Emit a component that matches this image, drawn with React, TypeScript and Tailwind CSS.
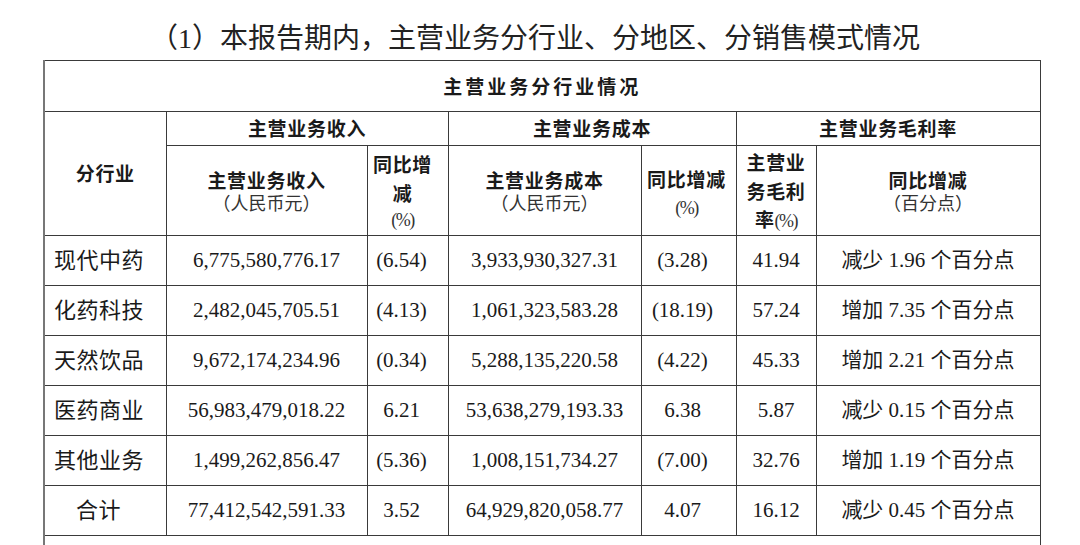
const serif = "font-['Liberation_Serif','Noto_Sans_CJK_SC',serif]"
const hei = "font-['Noto_Sans_CJK_SC',sans-serif]"

interface Row {
  name: string
  revenue: string
  revenueYoy: string
  cost: string
  costYoy: string
  margin: string
  marginYoy: string
  total?: boolean
}

const rows: Row[] = [
  { name: '现代中药', revenue: '6,775,580,776.17', revenueYoy: '(6.54)', cost: '3,933,930,327.31', costYoy: '(3.28)', margin: '41.94', marginYoy: '减少 1.96 个百分点' },
  { name: '化药科技', revenue: '2,482,045,705.51', revenueYoy: '(4.13)', cost: '1,061,323,583.28', costYoy: '(18.19)', margin: '57.24', marginYoy: '增加 7.35 个百分点' },
  { name: '天然饮品', revenue: '9,672,174,234.96', revenueYoy: '(0.34)', cost: '5,288,135,220.58', costYoy: '(4.22)', margin: '45.33', marginYoy: '增加 2.21 个百分点' },
  { name: '医药商业', revenue: '56,983,479,018.22', revenueYoy: '6.21', cost: '53,638,279,193.33', costYoy: '6.38', margin: '5.87', marginYoy: '减少 0.15 个百分点' },
  { name: '其他业务', revenue: '1,499,262,856.47', revenueYoy: '(5.36)', cost: '1,008,151,734.27', costYoy: '(7.00)', margin: '32.76', marginYoy: '增加 1.19 个百分点' },
  { name: '合计', revenue: '77,412,542,591.33', revenueYoy: '3.52', cost: '64,929,820,058.77', costYoy: '4.07', margin: '16.12', marginYoy: '减少 0.45 个百分点', total: true },
]

const cell = 'border border-[#3a3a3a] p-0 align-middle'
const head = `${cell} ${hei} font-bold text-[19px] tracking-[0.7px] text-[#1a1a1a] text-center`
// the small "(%)" marks in the header are narrow in the original
const pct = `${serif} font-normal text-[18px] tracking-[-1.5px] text-[#333]`

export default function App() {
  return (
    <div className="w-[1080px] h-[545px] overflow-hidden bg-white text-[#1a1a1a]">
      <div className={`${serif} h-[60px] pt-[23px] pr-[10px] text-center text-[28px] leading-[32px] text-[#222]`}>
        （1）本报告期内，主营业务分行业、分地区、分销售模式情况
      </div>

      <table className="ml-[43px] w-[997px] table-fixed border-collapse border-l-2 border-l-[#777]">
        <colgroup>
          <col className="w-[122px]" />
          <col className="w-[201px]" />
          <col className="w-[81px]" />
          <col className="w-[193px]" />
          <col className="w-[95px]" />
          <col className="w-[80px]" />
          <col className="w-[224px]" />
        </colgroup>
        <thead>
          <tr className="h-[51px]">
            <th colSpan={7} className={`${head} tracking-[3px] border-l-[#777] pt-[1px]`}>主营业务分行业情况</th>
          </tr>
          <tr className="h-[34px]">
            <th rowSpan={2} className={`${head} border-l-[#777]`}>分行业</th>
            <th colSpan={2} className={head}>主营业务收入</th>
            <th colSpan={2} className={head}>主营业务成本</th>
            <th colSpan={2} className={head}>主营业务毛利率</th>
          </tr>
          <tr className="h-[90px]">
            <th className={head}>
              <div className="leading-[25px] pt-[2px]">主营业务收入</div>
              <div className={`${serif} font-normal text-[18px] tracking-normal leading-[25px] text-[#333]`}>（人民币元）</div>
            </th>
            <th className={`${head} pr-[10px]`}>
              <div className="leading-[29px]">同比增</div>
              <div className="leading-[29px]">减</div>
              <div className={`${pct} leading-[26px]`}>(%)</div>
            </th>
            <th className={head}>
              <div className="leading-[25px] pt-[2px]">主营业务成本</div>
              <div className={`${serif} font-normal text-[18px] tracking-normal leading-[25px] text-[#333]`}>（人民币元）</div>
            </th>
            <th className={`${head} pr-[4px]`}>
              <div className="leading-[30px] pt-[4px]">同比增减</div>
              <div className={`${pct} leading-[28px]`}>(%)</div>
            </th>
            <th className={head}>
              <div className="leading-[29px]">主营业</div>
              <div className="leading-[29px]">务毛利</div>
              <div className="leading-[28px]">
                率<span className={pct}>(%)</span>
              </div>
            </th>
            <th className={head}>
              <div className="leading-[25px] pt-[2px]">同比增减</div>
              <div className={`${serif} font-normal text-[18px] tracking-normal leading-[25px] text-[#333]`}>（百分点）</div>
            </th>
          </tr>
        </thead>
        <tbody className={`${serif} text-[21px] text-[#1a1a1a]`}>
          {rows.map((row) => (
            <tr key={row.name} className="h-[50px]">
              <td className={`${cell} border-l-[#777] ${row.total ? 'pl-[31px]' : 'pl-[9px]'} text-[22px] tracking-[0.5px]`}>
                {row.name}
              </td>
              <td className={`${cell} text-center`}>{row.revenue}</td>
              <td className={`${cell} text-center pr-[12px]`}>{row.revenueYoy}</td>
              <td className={`${cell} text-center`}>{row.cost}</td>
              <td className={`${cell} text-center pr-[12px]`}>{row.costYoy}</td>
              <td className={`${cell} text-center`}>{row.margin}</td>
              <td className={`${cell} text-center`}>{row.marginYoy}</td>
            </tr>
          ))}
          <tr className="h-[50px]">
            <td colSpan={7} className={`${cell} border-l-[#777]`}></td>
          </tr>
        </tbody>
      </table>
    </div>
  )
}
